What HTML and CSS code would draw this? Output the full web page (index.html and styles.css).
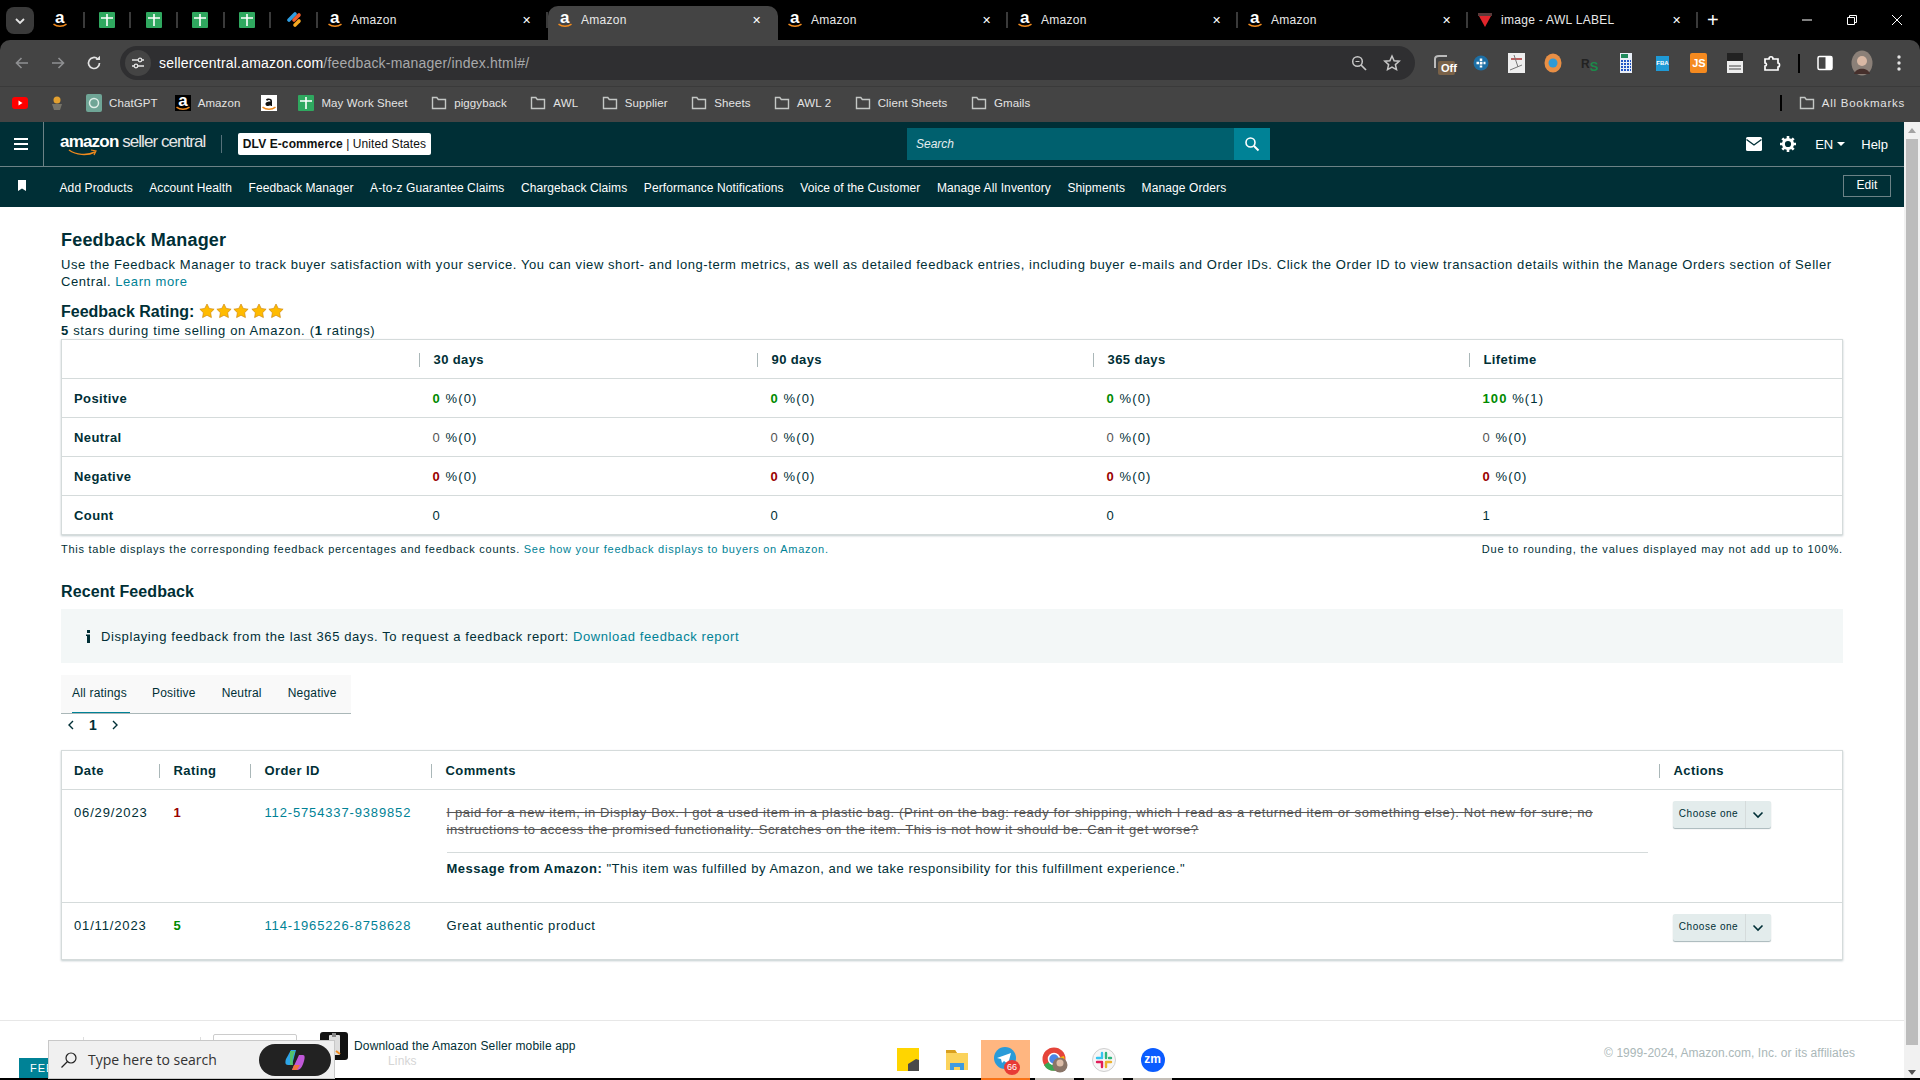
FILE: index.html
```html
<!DOCTYPE html>
<html>
  <head>
    <meta charset="utf-8">
    <title>Feedback Manager</title>
    <link rel="stylesheet" href="styles.css">
  </head>
  <body>
    <svg class="defs" width="0" height="0">
      <symbol id="amz" viewBox="0 0 16 16">
        <text x="8" y="11" text-anchor="middle" class="amz-letter">a</text>
        <path d="M1.500 12.200c3.800 2.800 9.200 2.800 13 0" fill="none" stroke="#f08a1d" stroke-width="1.500"/>
      </symbol>
      <symbol id="sheet" viewBox="0 0 16 16">
        <rect width="16" height="16" rx="1" fill="#2fa85f"/>
        <path d="M2 5.300h12v1.500H8.800V14H7.200V6.800H2zM7.200 2h1.600v3.300H7.200z" fill="#fff"/>
      </symbol>
      <symbol id="folder" viewBox="0 0 16 16">
        <path d="M1.500 2.500h4.300l1.500 2h7.200v9h-13z" fill="none" stroke="#c4c7c5" stroke-width="1.400"/>
      </symbol>
      <symbol id="chev" viewBox="0 0 12 8">
        <path d="M1.500 1.500 6 6l4.500-4.500" fill="none" stroke="#002f36" stroke-width="1.600"/>
      </symbol>
      <symbol id="star" viewBox="0 0 16 16">
        <path d="M8 1 10.230 5.430 15.130 6.180 11.610 9.670 12.410 14.570 8 12.300 3.590 14.570 4.390 9.670 .87 6.180 5.770 5.430z" fill="#ffbb00" stroke="#d08a10" stroke-width=".7"/>
      </symbol>
    </svg>

    <div class="tabstrip">
      <div class="tab-search"><svg width="12" height="8"><path d="M2 2l4 4 4-4" fill="none" stroke="#e3e3e3" stroke-width="1.800"/></svg></div>
      <div class="pinned"><svg class="fav"><use href="#amz"/></svg></div>
      <div class="pinned"><svg class="fav"><use href="#sheet"/></svg></div>
      <div class="pinned"><svg class="fav"><use href="#sheet"/></svg></div>
      <div class="pinned"><svg class="fav"><use href="#sheet"/></svg></div>
      <div class="pinned"><svg class="fav"><use href="#sheet"/></svg></div>
      <div class="pinned">
        <svg class="fav" viewBox="0 0 16 16"><path d="M3 8l6-6" stroke="#2f9de1" stroke-width="3.600" stroke-linecap="round"/><path d="M8 8l5-5" stroke="#ef5b2b" stroke-width="3.600" stroke-linecap="round"/><path d="M9 13l4-4" stroke="#f6a821" stroke-width="3.600" stroke-linecap="round"/></svg>
      </div>
      <div class="tab"><svg class="fav"><use href="#amz"/></svg><span class="tab-title">Amazon</span><span class="tab-close">&#10005;</span></div>
      <div class="tab tab-active"><svg class="fav"><use href="#amz"/></svg><span class="tab-title">Amazon</span><span class="tab-close">&#10005;</span></div>
      <div class="tab"><svg class="fav"><use href="#amz"/></svg><span class="tab-title">Amazon</span><span class="tab-close">&#10005;</span></div>
      <div class="tab"><svg class="fav"><use href="#amz"/></svg><span class="tab-title">Amazon</span><span class="tab-close">&#10005;</span></div>
      <div class="tab"><svg class="fav"><use href="#amz"/></svg><span class="tab-title">Amazon</span><span class="tab-close">&#10005;</span></div>
      <div class="tab">
        <svg class="fav" viewBox="0 0 16 16"><rect x="1" y="1" width="14" height="3" fill="#5a3a3a"/><path d="M2 4h12L8 15z" fill="#e2252b"/></svg>
        <span class="tab-title">image - AWL LABEL</span><span class="tab-close">&#10005;</span>
      </div>
      <div class="tab-new">+</div>
      <div class="win-controls">
        <svg width="12" height="12" viewBox="0 0 12 12"><path d="M1 6h10" stroke="#fff"/></svg>
        <svg width="12" height="12" viewBox="0 0 12 12"><path d="M1.500 3.500h7v7h-7zM3.500 3.500v-2h7v7h-2" fill="none" stroke="#fff"/></svg>
        <svg width="12" height="12" viewBox="0 0 12 12"><path d="M1 1l10 10M11 1L1 11" stroke="#fff"/></svg>
      </div>
    </div>

    <div class="toolbar">
      <svg class="nav-ico" viewBox="0 0 16 16"><path d="M14 8H3M7.500 3 2.500 8l5 5" fill="none" stroke="#8f9092" stroke-width="1.600"/></svg>
      <svg class="nav-ico" viewBox="0 0 16 16"><path d="M2 8h11M8.500 3l5 5-5 5" fill="none" stroke="#8f9092" stroke-width="1.600"/></svg>
      <svg class="nav-ico" viewBox="0 0 16 16"><path d="M13.500 8A5.500 5.500 0 1 1 11.800 4" fill="none" stroke="#e3e3e3" stroke-width="1.700"/><path d="M9.500 5h4.500V.8z" fill="#e3e3e3"/></svg>
      <div class="omnibox">
        <div class="site-btn"><svg width="14" height="14" viewBox="0 0 14 14"><path d="M1 4h6M11 4h2M1 10h2M7 10h6" stroke="#e3e3e3" stroke-width="1.300"/><circle cx="9" cy="4" r="1.800" fill="none" stroke="#e3e3e3" stroke-width="1.300"/><circle cx="5" cy="10" r="1.800" fill="none" stroke="#e3e3e3" stroke-width="1.300"/></svg></div>
        <span class="url">sellercentral.amazon.com<span class="url-path">/feedback-manager/index.html#/</span></span>
        <svg class="omni-zoom" width="16" height="16" viewBox="0 0 16 16"><circle cx="6.500" cy="6.500" r="4.800" fill="none" stroke="#c7c7c7" stroke-width="1.500"/><path d="M10 10l5 5" stroke="#c7c7c7" stroke-width="1.700"/><path d="M4.500 6.500h4" stroke="#c7c7c7"/></svg>
        <svg class="omni-star" width="18" height="18" viewBox="0 0 18 18"><path d="M9 2l2.100 4.700 5.100.5-3.800 3.400 1.100 5L9 13l-4.500 2.600 1.100-5L1.800 7.200l5.100-.5z" fill="none" stroke="#c7c7c7" stroke-width="1.500"/></svg>
      </div>
      <div class="ext-row">
        <div class="ext">
          <svg width="24" height="24" viewBox="0 0 24 24"><path d="M3 17V8c0-2 2-3 4-3h8" fill="none" stroke="#bbb" stroke-width="2"/><rect x="6" y="10" width="17" height="14" rx="2" fill="#7a6248"/></svg>
          <span class="ext-off">Off</span>
        </div>
        <div class="ext"><svg width="16" height="16" viewBox="0 0 16 16"><circle cx="8" cy="8" r="7.500" fill="#1d6fa5"/><path d="M8 3.500v9M3.500 8h9" stroke="#fff" stroke-width="2.500" stroke-dasharray="2.500 1"/></svg></div>
        <div class="ext"><svg width="17" height="20" viewBox="0 0 17 20"><rect width="17" height="20" fill="#eee"/><path d="M3 6h11" stroke="#a33" stroke-width="1.500"/><path d="M2 17l12-5M6 2l4 12" stroke="#777"/></svg></div>
        <div class="ext"><svg width="18" height="20" viewBox="0 0 18 20"><ellipse cx="9" cy="10" rx="8.500" ry="9.500" fill="#e88f45"/><circle cx="9" cy="10" r="4.500" fill="#2e9ad6"/></svg></div>
        <div class="ext"><span class="ext-rs">R<span class="ext-rs-s">S</span></span></div>
        <div class="ext"><svg width="12" height="20" viewBox="0 0 12 20"><rect width="12" height="20" fill="#e8eef7"/><rect x="1" y="1" width="7" height="4" fill="#1f8a5b"/><path d="M1 8h10M1 11h10M1 14h10M1 17h10" stroke="#2456c4" stroke-width="2" stroke-dasharray="2 1"/></svg></div>
        <div class="ext"><span class="ext-fba">FBA</span></div>
        <div class="ext"><span class="ext-js">JS</span></div>
        <div class="ext"><svg width="16" height="20" viewBox="0 0 16 20"><rect width="16" height="20" fill="#eee"/><rect width="16" height="8" fill="#222"/><path d="M2 13h12M2 16h12" stroke="#444"/></svg></div>
        <div class="ext"><svg width="18" height="18" viewBox="0 0 18 18"><path d="M2 5h4c0-3 4-3 4 0h5v4c2 0 2 4 0 4v3H2v-4c2 0 2-3 0-3z" fill="none" stroke="#fff" stroke-width="1.700"/></svg></div>
      </div>
      <span class="tool-sep"></span>
      <svg class="tool-panel" width="16" height="16" viewBox="0 0 16 16"><rect x="1" y="1.500" width="14" height="13" rx="1.500" fill="none" stroke="#fff" stroke-width="1.500"/><rect x="8.500" y="1.500" width="6.500" height="13" fill="#fff"/></svg>
      <svg class="avatar" width="22" height="26" viewBox="0 0 22 26"><ellipse cx="11" cy="13" rx="10.500" ry="12.500" fill="#8b8078"/><circle cx="11" cy="11" r="5" fill="#d9b8a4"/><path d="M3 24c2-7 14-7 16 0z" fill="#46302c"/></svg>
      <svg class="tool-dots" width="4" height="16" viewBox="0 0 4 16"><circle cx="2" cy="2" r="1.700" fill="#e3e3e3"/><circle cx="2" cy="8" r="1.700" fill="#e3e3e3"/><circle cx="2" cy="14" r="1.700" fill="#e3e3e3"/></svg>
    </div>

    <div class="bookmarks">
      <div class="bm">
        <svg width="16" height="12" viewBox="0 0 16 12"><rect width="16" height="12" rx="3" fill="#f00"/><path d="M6.500 3.500v5l4-2.500z" fill="#fff"/></svg>
      </div>
      <div class="bm">
        <svg width="16" height="16" viewBox="0 0 16 16"><circle cx="8" cy="5" r="3.500" fill="#e3a02f"/><path d="M3 9h10L11 15H5z" fill="#77746a"/></svg>
      </div>
      <div class="bm bm-tight">
        <svg width="16" height="18" viewBox="0 0 16 18"><rect width="16" height="18" rx="2" fill="#6fa596"/><circle cx="8" cy="9" r="4.500" fill="none" stroke="#dfeee8" stroke-width="1.500"/></svg>
        <span>ChatGPT</span>
      </div>
      <div class="bm"><svg class="fav fav-dark"><use href="#amz"/></svg><span>Amazon</span></div>
      <div class="bm"><svg class="fav fav-white" viewBox="0 0 16 16"><path d="M5 4.500C6 3 11 3 11 6v5H9.500V10C8 11.500 4.500 11.500 4.500 9c0-2 3-2.500 5-2.500C9.500 4.500 7 4.500 6 6z" fill="#111"/><path d="M1.500 12.200c3.800 2.800 9.200 2.800 13 0" fill="none" stroke="#f08a1d" stroke-width="1.500"/></svg></div>
      <div class="bm"><svg class="fav"><use href="#sheet"/></svg><span>May Work Sheet</span></div>
      <div class="bm bm-folder"><svg class="fav"><use href="#folder"/></svg><span>piggyback</span></div>
      <div class="bm bm-folder"><svg class="fav"><use href="#folder"/></svg><span>AWL</span></div>
      <div class="bm bm-folder"><svg class="fav"><use href="#folder"/></svg><span>Supplier</span></div>
      <div class="bm bm-folder"><svg class="fav"><use href="#folder"/></svg><span>Sheets</span></div>
      <div class="bm bm-folder"><svg class="fav"><use href="#folder"/></svg><span>AWL 2</span></div>
      <div class="bm bm-folder"><svg class="fav"><use href="#folder"/></svg><span>Client Sheets</span></div>
      <div class="bm bm-folder"><svg class="fav"><use href="#folder"/></svg><span>Gmails</span></div>
      <span class="bm-sep"></span>
      <div class="bm bm-all"><svg class="fav"><use href="#folder"/></svg><span>All Bookmarks</span></div>
    </div>

    <div class="viewport">
      <div class="app">
        <header class="sc-header">
          <div class="burger"><span></span><span></span><span></span></div>
          <div class="logo">
            <span class="logo-amazon">amazon</span> <span class="logo-rest">seller central</span>
            <svg class="logo-smile" width="30" height="8" viewBox="0 0 30 8"><path d="M1 1c7 5 18 6 26 2" fill="none" stroke="#f08a1d" stroke-width="1.500"/><path d="M23 1l5 1-2 4" fill="none" stroke="#f08a1d" stroke-width="1.200"/></svg>
          </div>
          <span class="logo-sep"></span>
          <div class="account"><b>DLV E-commerce</b> | United States</div>
          <div class="sc-search">
            <span class="sc-search-text">Search</span>
            <div class="sc-search-btn"><svg width="16" height="16" viewBox="0 0 16 16"><circle cx="6.500" cy="6.500" r="4.500" fill="none" stroke="#fff" stroke-width="1.600"/><path d="M10 10l4.500 4.500" stroke="#fff" stroke-width="2"/></svg></div>
          </div>
          <div class="sc-right">
            <svg class="sc-mail" width="16" height="14" viewBox="0 0 16 14"><rect width="16" height="14" rx="1.500" fill="#fff"/><path d="M0.500 2.500 8 8l7.500-5.500" fill="none" stroke="#002f36" stroke-width="1.400"/></svg>
            <svg class="sc-gear" width="16" height="16" viewBox="0 0 16 16"><circle cx="8" cy="8" r="4.600" fill="none" stroke="#fff" stroke-width="3"/><path d="M8 0v3M8 13v3M0 8h3M13 8h3M2.300 2.300l2.200 2.200M11.500 11.500l2.200 2.200M13.700 2.300l-2.200 2.200M4.500 11.500l-2.200 2.200" stroke="#fff" stroke-width="2.600"/></svg>
            <span class="sc-lang">EN<i class="caret"></i></span>
            <span class="sc-help">Help</span>
          </div>
        </header>
        <nav class="sc-nav">
          <svg class="nav-mark" width="8" height="11" viewBox="0 0 8 11"><path d="M0 0h8v11L4 8.500 0 11z" fill="#fff"/></svg>
          <a>Add Products</a>
          <a>Account Health</a>
          <a>Feedback Manager</a>
          <a>A-to-z Guarantee Claims</a>
          <a>Chargeback Claims</a>
          <a>Performance Notifications</a>
          <a>Voice of the Customer</a>
          <a>Manage All Inventory</a>
          <a>Shipments</a>
          <a>Manage Orders</a>
          <span class="nav-edit">Edit</span>
        </nav>

        <main class="page">
          <h1 class="page-title">Feedback Manager</h1>
          <p class="intro">Use the Feedback Manager to track buyer satisfaction with your service. You can view short- and long-term metrics, as well as detailed feedback entries, including buyer e-mails and Order IDs. Click the Order ID to view transaction details within the Manage Orders section of Seller<br>Central. <a class="link">Learn more</a></p>
          <div class="rating-line">
            <span class="rating-label">Feedback Rating:</span>
            <svg class="star"><use href="#star"/></svg>
            <svg class="star"><use href="#star"/></svg>
            <svg class="star"><use href="#star"/></svg>
            <svg class="star"><use href="#star"/></svg>
            <svg class="star"><use href="#star"/></svg>
          </div>
          <div class="rating-sub"><b>5</b> stars during time selling on Amazon. (<b>1</b> ratings)</div>

          <table class="card-table summary">
            <colgroup><col class="s1"><col class="s2"><col class="s3"><col class="s4"><col></colgroup>
            <thead>
              <tr><th></th><th><span>30 days</span></th><th><span>90 days</span></th><th><span>365 days</span></th><th><span>Lifetime</span></th></tr>
            </thead>
            <tbody>
              <tr><th>Positive</th><td><b class="pos">0</b> %(0)</td><td><b class="pos">0</b> %(0)</td><td><b class="pos">0</b> %(0)</td><td><b class="pos">100</b> %(1)</td></tr>
              <tr><th>Neutral</th><td><span class="neu">0</span> %(0)</td><td><span class="neu">0</span> %(0)</td><td><span class="neu">0</span> %(0)</td><td><span class="neu">0</span> %(0)</td></tr>
              <tr><th>Negative</th><td><b class="neg">0</b> %(0)</td><td><b class="neg">0</b> %(0)</td><td><b class="neg">0</b> %(0)</td><td><b class="neg">0</b> %(0)</td></tr>
              <tr><th>Count</th><td>0</td><td>0</td><td>0</td><td>1</td></tr>
            </tbody>
          </table>
          <div class="table-note">
            <span>This table displays the corresponding feedback percentages and feedback counts. <a class="link">See how your feedback displays to buyers on Amazon.</a></span>
            <span class="note-right">Due to rounding, the values displayed may not add up to 100%.</span>
          </div>

          <h2 class="section-title">Recent Feedback</h2>
          <div class="info-box">
            <svg class="info-ico" width="5" height="13" viewBox="0 0 5 13"><rect x="1" width="3" height="3" fill="#002f36"/><path d="M0 4.500h4V13H1V6H0z" fill="#002f36"/></svg>
            <span>Displaying feedback from the last 365 days. To request a feedback report: <a class="link">Download feedback report</a></span>
          </div>
          <div class="rating-tabs">
            <span class="rt rt-on">All ratings</span>
            <span class="rt">Positive</span>
            <span class="rt">Neutral</span>
            <span class="rt">Negative</span>
          </div>
          <div class="pager">
            <svg width="8" height="10" viewBox="0 0 8 10"><path d="M6 1 2 5l4 4" fill="none" stroke="#002f36" stroke-width="1.400"/></svg>
            <b>1</b>
            <svg width="8" height="10" viewBox="0 0 8 10"><path d="M2 1l4 4-4 4" fill="none" stroke="#002f36" stroke-width="1.400"/></svg>
          </div>

          <table class="card-table recent">
            <colgroup><col class="r1"><col class="r2"><col class="r3"><col class="r4"><col></colgroup>
            <thead>
              <tr><th>Date</th><th><span>Rating</span></th><th><span>Order ID</span></th><th><span>Comments</span></th><th><span>Actions</span></th></tr>
            </thead>
            <tbody>
              <tr class="row-tall">
                <td class="num">06/29/2023</td>
                <td><b class="neg">1</b></td>
                <td class="num"><a class="link">112-5754337-9389852</a></td>
                <td>
                  <div class="struck">I paid for a new item, in Display Box. I got a used item in a plastic bag. (Print on the bag: ready for shipping, which I read as a returned item or something else). Not new for sure; no<br>instructions to access the promised functionality. Scratches on the item. This is not how it should be. Can it get worse?</div>
                  <div class="amz-msg"><b>Message from Amazon:</b> "This item was fulfilled by Amazon, and we take responsibility for this fulfillment experience."</div>
                </td>
                <td><div class="choose"><span class="choose-label">Choose one</span><span class="choose-arrow"><svg width="12" height="8"><use href="#chev"/></svg></span></div></td>
              </tr>
              <tr class="row-short">
                <td class="num">01/11/2023</td>
                <td><b class="pos">5</b></td>
                <td class="num"><a class="link">114-1965226-8758628</a></td>
                <td>Great authentic product</td>
                <td><div class="choose"><span class="choose-label">Choose one</span><span class="choose-arrow"><svg width="12" height="8"><use href="#chev"/></svg></span></div></td>
              </tr>
            </tbody>
          </table>
        </main>

        <footer class="sc-footer">
          <span class="foot-sep foot-sep-a"></span>
          <span class="foot-sep foot-sep-b"></span>
          <span class="foot-box"></span>
          <div class="app-promo">
            <svg width="28" height="28" viewBox="0 0 28 28"><rect width="28" height="28" rx="3" fill="#111"/><rect x="9" y="3" width="11" height="20" rx="1" fill="#ddd"/><path d="M12 1h4v4h-4z" fill="#888"/><path d="M16 19l4 3" stroke="#f08a1d" stroke-width="2"/></svg>
            <div class="app-promo-text">
              <span>Download the Amazon Seller mobile app</span>
              <span class="foot-links">Links</span>
            </div>
          </div>
          <span class="copyright">© 1999-2024, Amazon.com, Inc. or its affiliates</span>
        </footer>
      </div>
      <div class="scrollbar">
        <i class="sb-up"></i>
        <div class="sb-thumb"></div>
        <i class="sb-down"></i>
      </div>
    </div>
    <div class="os-edge"></div>

    <!-- things that sit on top of the page -->
    <div class="feedback-tab">FEE</div>
    <div class="win-search">
      <svg width="18" height="18" viewBox="0 0 18 18"><circle cx="11" cy="7" r="5" fill="none" stroke="#222" stroke-width="1.200"/><path d="M7.500 10.500 1.500 16.500" stroke="#222" stroke-width="1.300"/></svg>
      <span class="win-search-text">Type here to search</span>
      <div class="copilot">
        <svg width="24" height="24" viewBox="0 0 24 24"><path d="M8 2h5l-4 15H5C2 17 2 14 3 11z" fill="#2ea6e8"/><path d="M7 3h5c-2 5-3 9-2 14H7z" fill="#54c26a"/><path d="M16 7h4c2 0 2 3 1 6-1 4-3 9-7 9H9z" fill="#c058d8"/><path d="M11 17h6l-3 5H9z" fill="#f2703e"/></svg>
      </div>
    </div>
    <div class="win-apps">
      <div class="win-app">
        <svg width="22" height="23" viewBox="0 0 22 23"><rect width="22" height="23" fill="#ffd500"/><path d="M11 23V16l8-5 3 1v11z" fill="#4a4a4a"/></svg>
      </div>
      <div class="win-app">
        <svg width="22" height="20" viewBox="0 0 22 20"><path d="M0 0h9l2 3h11v17H0z" fill="#fbd35c"/><path d="M0 0h9l2 3H0z" fill="#d9a01f"/><path d="M4 20v-7h14v7h-4v-3H8v3z" fill="#3f9be0"/></svg>
      </div>
      <div class="win-app win-app-hot">
        <svg width="26" height="26" viewBox="0 0 26 26"><circle cx="12" cy="12" r="11" fill="#2a9bd8"/><path d="M4 12l14-5-3 11-4-3-2 2-1-4z" fill="#fff"/></svg>
        <span class="tg-badge">66</span>
      </div>
      <div class="win-app win-app-open">
        <svg width="26" height="26" viewBox="0 0 26 26"><circle cx="12" cy="12" r="11.500" fill="#e5443a"/><path d="M12 12 2 18a11.500 11.500 0 0 0 12 5.500z" fill="#36a853"/><path d="M12 12l10-3a11.500 11.500 0 0 1-8 14.500z" fill="#fbbc05"/><circle cx="12" cy="12" r="5.500" fill="#4a86e8" stroke="#fff" stroke-width="1.500"/><circle cx="18" cy="18" r="7.500" fill="#8a7568"/><circle cx="18" cy="16" r="3.500" fill="#dcbda8"/></svg>
      </div>
      <div class="win-app win-app-open">
        <svg width="24" height="24" viewBox="0 0 24 24"><circle cx="12" cy="12" r="11.500" fill="#f6f6f6" stroke="#cfcfcf"/><path d="M10 5v5M5 10h3" stroke="#36c5f0" stroke-width="2.400" stroke-linecap="round"/><path d="M14 5v5M19 10h-2" stroke="#2eb67d" stroke-width="2.400" stroke-linecap="round"/><path d="M14 19v-5M19 14h-5" stroke="#ecb22e" stroke-width="2.400" stroke-linecap="round"/><path d="M10 19v-5M5 14h5" stroke="#e01e5a" stroke-width="2.400" stroke-linecap="round"/></svg>
      </div>
      <div class="win-app win-app-open">
        <span class="zm">zm</span>
      </div>
    </div>
  </body>
</html>
```

FILE: styles.css
```css
* {
  box-sizing: border-box;
  margin: 0;
  padding: 0;
}

html,
body {
  width: 1920px;
  height: 1080px;
  overflow: hidden;
}

body {
  position: relative;
  background: #000;
  color: #002f36;
  font-family: "Liberation Sans", Arial, sans-serif;
  font-size: 13px;
}

.defs {
  display: none;
}

.amz-letter {
  font-family: "Liberation Sans", sans-serif;
  font-size: 17px;
  font-weight: 700;
  fill: #fff;
}

.fav {
  width: 16px;
  height: 16px;
  flex: none;
}

.fav-dark {
  background: #000;
}

.fav-white {
  background: #fff;
}

/* browser chrome */
.tabstrip {
  height: 40px;
  display: flex;
  background: #000;
  color: #e8e8e8;
  font-size: 12px;
  letter-spacing: 0.3px;
}

.tab-search {
  width: 28px;
  height: 27px;
  margin: 7px 4px 0 6px;
  border-radius: 8px;
  background: #3a3a3a;
  display: flex;
  align-items: center;
  justify-content: center;
}

.pinned {
  width: 46.66px;
  flex: none;
  display: flex;
  align-items: center;
  justify-content: center;
  padding-right: 2px;
  position: relative;
}

.pinned::after,
.tab::after {
  content: "";
  position: absolute;
  right: 0;
  top: 12px;
  height: 16px;
  width: 2px;
  background: #3a3a3a;
}

.tab {
  width: 230px;
  flex: none;
  display: flex;
  align-items: center;
  padding: 0 8px 0 9px;
  position: relative;
}

.tab-active {
  margin-top: 6px;
  padding-bottom: 6px;
  background: #444;
  border-radius: 10px 10px 0 0;
  height: 34px;
}

.tab-active::after {
  display: none;
}

.tab-title {
  margin-left: 8px;
  flex: 1;
}

.tab-close {
  width: 14px;
  font-size: 11px;
  text-align: center;
  margin-right: 6px;
  color: #fff;
}

.tab-new {
  width: 36px;
  text-align: center;
  font-size: 20px;
  line-height: 40px;
  color: #fff;
  margin-left: -3px;
}

.win-controls {
  margin-left: auto;
  display: flex;
  gap: 33px;
  align-items: center;
  padding-right: 17px;
}

.toolbar {
  height: 46px;
  background: #444;
  border-radius: 10px 10px 0 0;
  padding: 6px 0;
  display: flex;
  align-items: center;
  position: relative;
}

.nav-ico {
  width: 16px;
  height: 16px;
  margin-left: 14px;
  margin-right: 6px;
  flex: none;
}

.nav-ico:nth-child(3) {
  margin-right: 0;
}

.omnibox {
  width: 1295px;
  height: 34px;
  margin-left: 18px;
  border-radius: 17px;
  background: #2f2f31;
  display: flex;
  align-items: center;
  flex: none;
}

.site-btn {
  width: 26px;
  height: 26px;
  border-radius: 50%;
  background: #444;
  margin-left: 5px;
  display: flex;
  align-items: center;
  justify-content: center;
}

.url {
  margin-left: 8px;
  color: #fff;
  font-size: 14px;
  letter-spacing: 0.2px;
}

.url-path {
  color: #a8a9ab;
}

.omni-zoom {
  margin-left: auto;
}

.omni-star {
  margin: 0 14px 0 16px;
}

.ext-row {
  display: flex;
  margin-left: 11px;
}

.ext {
  width: 36.400px;
  height: 34px;
  display: flex;
  align-items: center;
  justify-content: center;
  position: relative;
}

.ext-off {
  position: absolute;
  left: 15px;
  top: 16px;
  color: #fff;
  font-size: 11px;
  font-weight: 700;
}

.ext-rs {
  font-size: 12px;
  font-weight: 700;
  color: #222;
}

.ext-rs-s {
  color: #1b8a4a;
  font-size: 13px;
  position: relative;
  top: 3px;
}

.ext-fba {
  width: 13px;
  height: 15px;
  background: #1f9ad6;
  color: #fff;
  font-size: 6px;
  font-weight: 700;
  line-height: 15px;
  text-align: center;
}

.ext-js {
  width: 17px;
  height: 20px;
  background: #f58a1f;
  color: #fff;
  font-size: 11px;
  font-weight: 700;
  line-height: 20px;
  text-align: center;
  border-radius: 2px;
}

.tool-sep {
  width: 2px;
  height: 19px;
  background: #000;
  margin-left: 8px;
}

.tool-panel {
  margin-left: 17px;
}

.avatar {
  margin-left: 18px;
}

.tool-dots {
  margin-left: 24px;
}

.bookmarks {
  height: 36px;
  background: #444;
  border-top: 1px solid #3a3a3a;
  padding-bottom: 3px;
  display: flex;
  align-items: center;
  gap: 21px;
  padding-left: 12px;
  color: #e3e3e3;
  font-size: 11.500px;
  letter-spacing: 0.1px;
}

.bm {
  display: flex;
  align-items: center;
  gap: 7px;
  white-space: nowrap;
}

.bm-tight {
  margin-right: -4px;
}

.bm-folder {
  margin-left: 2.500px;
}

.bm-all {
  letter-spacing: 0.75px;
  padding-right: 15px;
}

.bm-sep {
  width: 2px;
  height: 16px;
  background: #000;
  margin-left: auto;
  margin-right: -4px;
}

/* seller central */
.viewport {
  height: 956px;
  display: flex;
  background: #fff;
}

.app {
  width: 1904px;
  display: flex;
  flex-direction: column;
}

.scrollbar {
  width: 16px;
  background: #f1f1f1;
  display: flex;
  flex-direction: column;
  align-items: center;
}

.sb-thumb {
  width: 12px;
  flex: 1;
  background: #bcbcbc;
}

.sb-up,
.sb-down {
  height: 0;
  width: 0;
  border-left: 4px solid transparent;
  border-right: 4px solid transparent;
}

.sb-up {
  border-bottom: 5px solid #a3a3a3;
  margin: 6px 0;
}

.sb-down {
  border-top: 5px solid #505050;
  margin: 25px 0 3px;
}

.os-edge {
  height: 2px;
  background: #000;
}

.sc-header {
  height: 45px;
  background: #002f36;
  border-bottom: 1px solid #6c8286;
  display: flex;
  align-items: center;
  color: #fff;
}

.burger {
  width: 44px;
  height: 44px;
  border-right: 1px solid #6c8286;
  display: flex;
  flex-direction: column;
  justify-content: center;
  gap: 3px;
  padding-left: 14px;
}

.burger span {
  width: 14px;
  height: 2px;
  background: #fff;
}

.logo {
  margin-left: 16px;
  width: 145px;
  position: relative;
  white-space: nowrap;
  font-size: 17px;
  line-height: 22px;
  padding-bottom: 4px;
}

.logo-amazon {
  font-weight: 700;
  letter-spacing: -0.8px;
}

.logo-rest {
  letter-spacing: -0.95px;
  color: #e6e6e6;
  margin-left: -1px;
}

.logo-smile {
  position: absolute;
  left: 8px;
  top: 18px;
}

.logo-sep {
  width: 1px;
  height: 18px;
  background: #56717a;
  margin-left: 16px;
}

.account {
  width: 193px;
  height: 22px;
  margin-left: 16px;
  background: #fff;
  border-radius: 2px;
  color: #0f1111;
  font-size: 12px;
  line-height: 22px;
  text-align: center;
  letter-spacing: 0.1px;
}

.sc-search {
  width: 363px;
  height: 32px;
  margin-left: 476px;
  background: #00606e;
  display: flex;
  align-items: center;
}

.sc-search-text {
  flex: 1;
  padding-left: 9px;
  font-style: italic;
  font-size: 12px;
  color: #e6eef0;
}

.sc-search-btn {
  width: 36px;
  height: 32px;
  background: #008296;
  display: flex;
  align-items: center;
  justify-content: center;
}

.sc-right {
  margin-left: auto;
  display: flex;
  align-items: center;
  padding-right: 16px;
  font-size: 13px;
}

.sc-gear {
  margin-left: 18px;
}

.sc-lang {
  margin-left: 19px;
  display: flex;
  align-items: center;
}

.caret {
  width: 0;
  height: 0;
  margin-left: 4px;
  border-left: 4px solid transparent;
  border-right: 4px solid transparent;
  border-top: 4px solid #fff;
}

.sc-help {
  margin-left: 16px;
}

.sc-nav {
  height: 40px;
  background: #002f36;
  color: #fff;
  display: flex;
  align-items: center;
  gap: 16.500px;
  padding-left: 18px;
  padding-right: 13px;
  font-size: 12px;
  letter-spacing: 0.1px;
  white-space: nowrap;
}

.sc-nav a {
  margin-top: 1px;
}

.nav-mark {
  margin-right: 17px;
  margin-top: -3px;
}

.nav-edit {
  margin-left: auto;
  width: 48px;
  height: 22px;
  border: 1px solid #6c8286;
  text-align: center;
  line-height: 18px;
  margin-top: -3px;
}

.page {
  flex: 1;
  padding: 23px 61px 0;
  font-size: 13px;
  letter-spacing: 0.57px;
}

.page-title {
  font-size: 18px;
  line-height: 20px;
  font-weight: 700;
  letter-spacing: 0.2px;
}

.intro {
  margin-top: 6px;
  line-height: 17px;
  white-space: nowrap;
}

.link {
  color: #008296;
}

.rating-line {
  margin-top: 12px;
  height: 20px;
  display: flex;
  align-items: center;
  gap: 1.300px;
}

.rating-label {
  font-size: 16px;
  font-weight: 700;
  letter-spacing: 0;
  margin-right: 3px;
}

.star {
  width: 16px;
  height: 16px;
  margin-top: -2px;
}

.rating-sub {
  height: 17px;
  line-height: 17px;
  letter-spacing: 0.65px;
}

.card-table {
  width: 100%;
  border-collapse: collapse;
  table-layout: fixed;
  border: 1px solid #d5dbdb;
  box-shadow: 0 1px 2px rgba(0, 47, 54, 0.25);
}

.card-table tr {
  border-bottom: 1px solid #d5dbdb;
}

.card-table tbody tr:last-child {
  border-bottom: 0;
}

.card-table th {
  text-align: left;
  font-weight: 700;
  padding-left: 12px;
  letter-spacing: 0.4px;
}

.card-table thead th {
  padding-top: 1px;
}

.card-table thead th span {
  display: block;
  border-left: 1px solid #aab7b8;
  line-height: 14px;
  padding-left: 14px;
  margin-left: -12px;
}

.card-table td {
  padding-left: 14px;
}

.summary tr {
  height: 39px;
}

.summary td {
  letter-spacing: 1.100px;
}

.s1 {
  width: 357px;
}

.s2 {
  width: 338px;
}

.s3 {
  width: 336px;
}

.s4 {
  width: 376px;
}

.pos {
  color: #008a00;
}

.neg {
  color: #990000;
}

.neu {
  color: #555;
}

.table-note {
  margin-top: 5px;
  display: flex;
  justify-content: space-between;
  font-size: 11px;
  line-height: 18px;
  letter-spacing: 0.74px;
  white-space: nowrap;
}

.note-right {
  letter-spacing: 0.85px;
}

.section-title {
  margin-top: 24px;
  font-size: 16px;
  line-height: 20px;
  font-weight: 700;
  letter-spacing: 0.1px;
}

.info-box {
  margin-top: 7px;
  height: 54px;
  background: #f3f7f7;
  display: flex;
  align-items: center;
  gap: 10px;
  padding-left: 25px;
  letter-spacing: 0.6px;
  white-space: nowrap;
}

.rating-tabs {
  margin-top: 12px;
  width: 290px;
  height: 39px;
  background: #f9f9f9;
  border-bottom: 1px solid #aab7b8;
  display: flex;
  gap: 26px;
  padding-left: 11px;
  font-size: 12px;
  letter-spacing: 0.2px;
}

.rt {
  line-height: 37px;
  height: 38px;
}

.rt-on {
  border-bottom: 1px solid #008296;
  width: 58px;
  margin-right: -4px;
}

.pager {
  height: 22px;
  display: flex;
  align-items: center;
  gap: 14px;
  padding-left: 6px;
  font-size: 14px;
}

.recent {
  margin-top: 14px;
}

.r1 {
  width: 97px;
}

.r2 {
  width: 91px;
}

.r3 {
  width: 181px;
}

.r4 {
  width: 1228px;
}

.recent thead tr {
  height: 39px;
}

.recent td {
  vertical-align: top;
  padding-top: 14px;
  line-height: 17px;
}

.recent td:nth-child(n + 2) {
  padding-left: 15px;
}

.recent td:nth-child(4) {
  padding-left: 16px;
}

.recent td:first-child {
  padding-left: 12px;
}

.recent .num {
  letter-spacing: 0.85px;
}

.row-tall {
  height: 113px;
}

.row-short {
  height: 57px;
}

.struck {
  text-decoration: line-through;
  color: #555;
  padding-bottom: 14px;
  border-bottom: 1px solid #d5dbdb;
  margin-right: 11px;
  letter-spacing: 0.6px;
  white-space: nowrap;
}

.amz-msg {
  margin-top: 7px;
  letter-spacing: 0.52px;
  white-space: nowrap;
}

.choose {
  margin-top: -3px;
  margin-left: -1px;
  width: 98px;
  height: 27px;
  background: #e3ecec;
  border-radius: 2px;
  box-shadow: 0 1px 1px rgba(0, 47, 54, 0.35);
  display: flex;
  font-size: 10px;
  letter-spacing: 0.55px;
  line-height: 25px;
}

.choose-label {
  width: 73px;
  text-align: center;
  border-right: 1px solid #d5dbdb;
}

.choose-arrow {
  flex: 1;
  display: flex;
  align-items: center;
  justify-content: center;
}

.sc-footer {
  height: 58px;
  border-top: 1px solid #e7e7e7;
  background: #fff;
  display: flex;
  position: relative;
  padding-left: 320px;
  padding-top: 11px;
}

.foot-sep {
  position: absolute;
  top: 16px;
  width: 1px;
  height: 14px;
  background: #ddd;
}

.foot-sep-a {
  left: 83px;
}

.foot-sep-b {
  left: 200px;
}

.foot-box {
  position: absolute;
  left: 213px;
  top: 13px;
  width: 84px;
  height: 20px;
  border: 1px solid #ccc;
  border-radius: 2px;
}

.app-promo {
  display: flex;
  gap: 6px;
  font-size: 12px;
  letter-spacing: 0.15px;
  color: #002f36;
}

.app-promo-text {
  display: flex;
  flex-direction: column;
  line-height: 15px;
  padding-top: 7px;
}

.foot-links {
  color: #d5d5d5;
  margin-left: 34px;
}

.copyright {
  margin-left: auto;
  padding-right: 49px;
  font-size: 12px;
  letter-spacing: 0.06px;
  color: #aab7b8;
  line-height: 42px;
}

/* overlays from the screenshot */
.feedback-tab {
  position: absolute;
  left: 19px;
  top: 1058px;
  width: 40px;
  height: 20px;
  background: #008296;
  color: #fff;
  font-size: 11px;
  letter-spacing: 1px;
  padding: 4px 0 0 11px;
}

.win-search {
  position: absolute;
  left: 48px;
  top: 1040px;
  width: 287px;
  height: 39px;
  background: #f0f0f0;
  border: 1px solid #c8c8c8;
  display: flex;
  align-items: center;
  padding-left: 11px;
}

.win-search-text {
  margin-left: 10px;
  font-family: "Open Sans", sans-serif;
  font-size: 14px;
  color: #333;
}

.copilot {
  width: 72px;
  height: 32px;
  margin-left: auto;
  margin-right: 3px;
  border-radius: 16px;
  background: #222;
  display: flex;
  align-items: center;
  justify-content: center;
}

.win-apps {
  position: absolute;
  left: 883px;
  top: 1040px;
  display: flex;
  height: 40px;
}

.win-app {
  width: 49px;
  height: 40px;
  display: flex;
  align-items: center;
  justify-content: center;
  position: relative;
  padding-bottom: 1px;
}

.win-app-hot {
  background: #ffb680;
  border-bottom: 2px solid #f97316;
}

.win-app-open::after {
  content: "";
  position: absolute;
  left: 5px;
  right: 5px;
  bottom: 0;
  height: 2px;
  background: #c4bfb8;
}

.tg-badge {
  position: absolute;
  left: 23px;
  top: 20px;
  width: 16px;
  height: 15px;
  border-radius: 50%;
  background: #e83a35;
  color: #fff;
  font-size: 9px;
  line-height: 15px;
  text-align: center;
}

.zm {
  width: 24px;
  height: 24px;
  border-radius: 50%;
  background: #0b5cff;
  color: #fff;
  font-size: 12px;
  font-weight: 700;
  line-height: 23px;
  text-align: center;
}
```
